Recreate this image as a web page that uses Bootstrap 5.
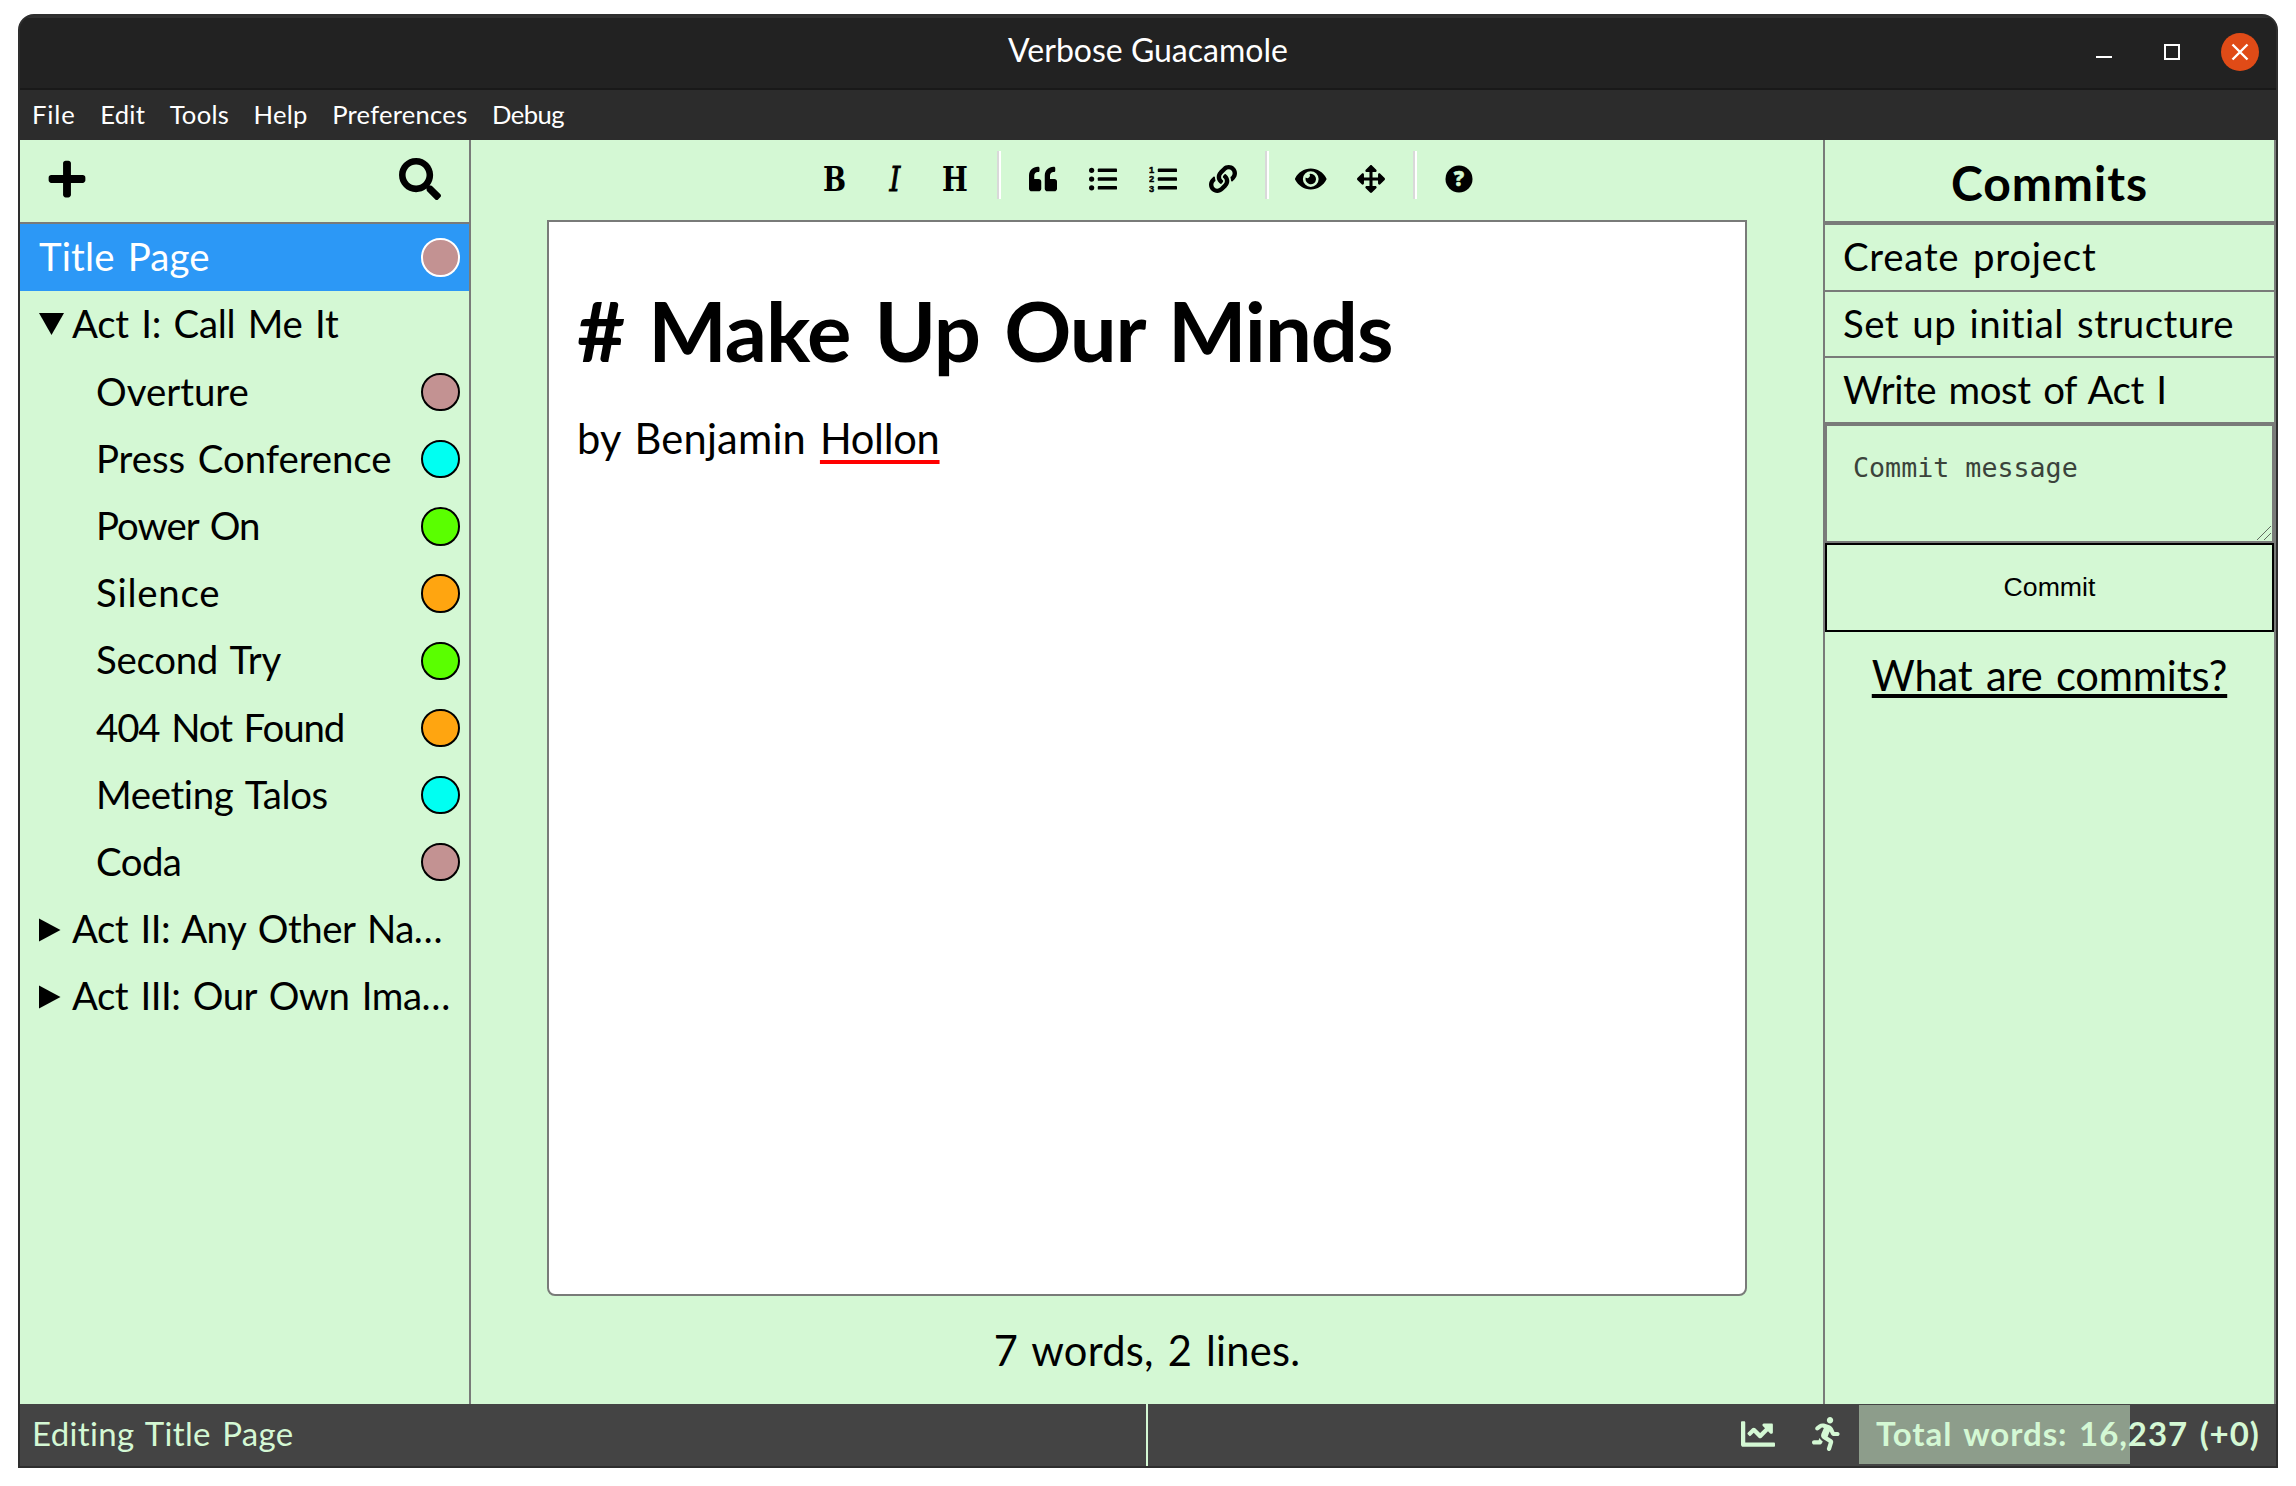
<!DOCTYPE html>
<html lang="en">
<head>
<meta charset="utf-8">
<title>Verbose Guacamole</title>
<link href="https://cdn.jsdelivr.net/npm/bootstrap@5.3.0/dist/css/bootstrap.min.css" rel="stylesheet">
<style>
:root { --mint: #d4f8d4; --line: #797b79; }
body { font-family: Lato, "Open Sans", sans-serif; color: #000; background: #fff; font-size: 38.4px; line-height: 1.2; overflow: hidden; font-variant-ligatures: no-common-ligatures; }
svg { display: block; fill: currentColor; }
.app-window { width: 2260px; height: 1454px; margin: 14px 18px; background: #2e2e2e; border: 2px solid #2e2e2e; border-radius: 16px 16px 0 0; overflow: hidden; }
.titlebar { height: 74px; background: #222; border-top: 2px solid #313131; border-bottom: 2px solid #191919; color: #fff; font-size: 32px; padding-bottom: 6px; }
.win-controls { top: 0; right: 17px; height: 68px; gap: 41px; }
.win-min { margin-right: 11px; }
.win-close { width: 38px; height: 38px; background: #e04b17; }
.menubar { height: 50px; background: #2c2c2c; color: #fff; font-size: 25.6px; letter-spacing: .01em; padding: 0 0 1px 12px; gap: 24.5px; }
.menubar span:first-child { letter-spacing: .035em; }
.menubar span:last-child { letter-spacing: -.02em; }
.workarea { height: 1264px; background: var(--mint); word-spacing: .08em; }
.files { width: 451px; border-right: 2px solid var(--line); }
.files-head { height: 84px; border-bottom: 2px solid var(--line); padding: 0 28.5px 4px 26px; }
.file-row { height: 67.2px; padding: 0 9.5px 2.5px 19px; white-space: nowrap; }
.file-row.current { background: #2c98f6; color: #fff; }
.file-row.child-doc { padding-left: 76px; }
.fold { width: 33px; }
.status-dot { width: 38.4px; height: 38.4px; border: 2px solid currentColor; margin-top: 2.5px; }
.s-rose { background: #c39292; } .s-cyan { background: #00fff2; } .s-green { background: #5aff00; } .s-orange { background: #ffa510; }
.tools { height: 80px; padding-bottom: 2px; }
.tool { width: 60px; height: 60px; }
.tool-glyph { font-family: "DejaVu Serif", serif; font-weight: 700; font-size: 33px; line-height: 1; font-stretch: condensed; transform: scaleX(.92); }
i.tool-glyph { font-style: italic; font-weight: 400; -webkit-text-stroke: .8px; }
.tool-sep { width: 4px; height: 48px; margin: 0 12px 8px; border-left: 2px solid #d9d9d9; border-right: 2px solid #fff; }
.page-sheet { width: 1200px; height: 1076px; background: #fff; border: 2px solid var(--line); border-radius: 0 0 8px 8px; padding: 58px 28px; }
.doc-title { font-size: 83.2px; line-height: 100px; font-weight: 700; margin: 0; word-spacing: .06em; letter-spacing: -.013em; }
.doc-line { font-size: 41.6px; line-height: 50px; letter-spacing: .005em; margin: 33px 0 0; }
.misspelt { text-decoration: underline 4px red; text-underline-offset: 6px; text-decoration-skip-ink: none; letter-spacing: -.006em; }
.counts { font-size: 41.6px; letter-spacing: .006em; margin-top: 29px; line-height: 50px; }
.commits { width: 453px; border: 2px solid var(--line); border-width: 0 2px; }
.commits-head { height: 85px; border-bottom: 4px solid var(--line); font-size: 48px; font-weight: 700; letter-spacing: .02em; padding-top: 4px; margin: 0; }
.commit-row { height: 66px; padding: 0 18px 2.5px; border-bottom: 2px solid var(--line); white-space: nowrap; }
.commit-msg { display: block; width: 100%; height: 119px; border: 2px solid var(--line); background: transparent; padding: 26px 26px; font: 26.67px/31px "DejaVu Sans Mono", monospace; word-spacing: 0; border-radius: 0; outline: 0; resize: none; }
.commit-msg::placeholder { color: #3b433b; opacity: 1; }
.grip { right: 3px; bottom: 3px; fill: none; stroke: #5f6b5f; }
.commit-go { width: 100%; height: 89px; border: 2px solid #000; border-radius: 0; padding: 0; font: 26.67px/1 "Liberation Sans", Arial, sans-serif; color: #000; }
.commit-help { font-size: 41.6px; line-height: 50px; margin-top: 18px; color: #000; letter-spacing: -.004em; text-decoration: underline 4px; text-underline-offset: 3px; text-decoration-skip-ink: none; }
.statusbar { height: 62px; background: #444; color: var(--mint); font-size: 33px; white-space: nowrap; word-spacing: .08em; }
.status-half { width: 1127.5px; border-right: 2px solid var(--mint); padding: 0 0 2px 12px; letter-spacing: .01em; }
.word-goal { width: 417px; height: 59px; margin-top: 1px; padding: 0 0 1px 17px; font-weight: 700; letter-spacing: .028em; background: linear-gradient(#8d9d8b, #8d9d8b) no-repeat 0 0 / 271px 100%; }
</style>
</head>
<body>
<div class="app-window">
  <header class="titlebar position-relative d-flex align-items-center justify-content-center">
    <span>Verbose Guacamole</span>
    <div class="win-controls position-absolute d-flex align-items-center">
      <svg class="win-min" width="16" height="16"><path d="M0 12h16v2H0z"/></svg>
      <svg width="16" height="16"><path d="M0 0h16v16H0zM2 2v12h12V2z" fill-rule="evenodd"/></svg>
      <span class="win-close rounded-circle d-flex align-items-center justify-content-center"><svg width="18" height="18" stroke="#fff" stroke-width="2.4"><path d="M1.5 1.5l15 15M16.5 1.5l-15 15"/></svg></span>
    </div>
  </header>
  <nav class="menubar d-flex align-items-center">
    <span>File</span><span>Edit</span><span>Tools</span><span>Help</span><span>Preferences</span><span>Debug</span>
  </nav>
  <main class="workarea d-flex">
    <aside class="files flex-shrink-0">
      <div class="files-head d-flex align-items-center justify-content-between">
        <svg width="42" height="42" viewBox="-32 0 512 512"><path d="M416 208H272V64c0-17.67-14.33-32-32-32h-32c-17.67 0-32 14.33-32 32v144H32c-17.67 0-32 14.33-32 32v32c0 17.67 14.33 32 32 32h144v144c0 17.67 14.33 32 32 32h32c17.67 0 32-14.33 32-32V304h144c17.67 0 32-14.33 32-32v-32c0-17.67-14.33-32-32-32z"/></svg>
        <svg width="42" height="42" viewBox="0 0 512 512"><path d="M505 442.7L405.3 343c-4.5-4.5-10.6-7-17-7H372c27.6-35.3 44-79.7 44-128C416 93.1 322.9 0 208 0S0 93.1 0 208s93.1 208 208 208c48.3 0 92.7-16.4 128-44v16.3c0 6.4 2.5 12.5 7 17l99.7 99.7c9.4 9.4 24.6 9.4 33.9 0l28.3-28.3c9.4-9.4 9.4-24.6.1-34zM208 336c-70.7 0-128-57.2-128-128 0-70.7 57.2-128 128-128 70.7 0 128 57.2 128 128 0 70.7-57.2 128-128 128z"/></svg>
      </div>
      <div class="file-row current d-flex align-items-center justify-content-between" style="letter-spacing:.004em">Title Page<i class="status-dot rounded-circle s-rose"></i></div>
      <div class="file-row d-flex align-items-center" style="letter-spacing:-.008em"><svg class="fold" height="22" viewBox="0 0 33 22"><path d="M0 0h25L12.5 22z"/></svg>Act I: Call Me It</div>
      <div class="file-row child-doc d-flex align-items-center justify-content-between">Overture<i class="status-dot rounded-circle s-rose"></i></div>
      <div class="file-row child-doc d-flex align-items-center justify-content-between" style="letter-spacing:-.002em">Press Conference<i class="status-dot rounded-circle s-cyan"></i></div>
      <div class="file-row child-doc d-flex align-items-center justify-content-between" style="letter-spacing:-.026em">Power On<i class="status-dot rounded-circle s-green"></i></div>
      <div class="file-row child-doc d-flex align-items-center justify-content-between" style="letter-spacing:.02em">Silence<i class="status-dot rounded-circle s-orange"></i></div>
      <div class="file-row child-doc d-flex align-items-center justify-content-between" style="letter-spacing:-.007em">Second Try<i class="status-dot rounded-circle s-green"></i></div>
      <div class="file-row child-doc d-flex align-items-center justify-content-between" style="letter-spacing:-.029em">404 Not Found<i class="status-dot rounded-circle s-orange"></i></div>
      <div class="file-row child-doc d-flex align-items-center justify-content-between" style="letter-spacing:-.009em">Meeting Talos<i class="status-dot rounded-circle s-cyan"></i></div>
      <div class="file-row child-doc d-flex align-items-center justify-content-between" style="letter-spacing:-.015em">Coda<i class="status-dot rounded-circle s-rose"></i></div>
      <div class="file-row d-flex align-items-center" style="letter-spacing:-.013em"><svg class="fold mt-1" height="24" viewBox="0 0 33 24"><path d="M0 .5v23L21.5 12z"/></svg>Act II: Any Other Na…</div>
      <div class="file-row d-flex align-items-center" style="letter-spacing:-.013em"><svg class="fold mt-1" height="24" viewBox="0 0 33 24"><path d="M0 .5v23L21.5 12z"/></svg>Act III: Our Own Ima…</div>
    </aside>
    <section class="flex-grow-1 d-flex flex-column align-items-center">
      <div class="tools d-flex align-items-center">
        <span class="tool d-flex align-items-center justify-content-center"><b class="tool-glyph">B</b></span>
        <span class="tool d-flex align-items-center justify-content-center"><i class="tool-glyph">I</i></span>
        <span class="tool d-flex align-items-center justify-content-center"><b class="tool-glyph">H</b></span>
        <span class="tool-sep"></span>
        <span class="tool d-flex align-items-center justify-content-center"><svg width="28" height="28" viewBox="0 0 512 512"><path d="M464 256h-80v-64c0-35.3 28.7-64 64-64h8c13.3 0 24-10.7 24-24V56c0-13.3-10.7-24-24-24h-8c-88.4 0-160 71.6-160 160v240c0 26.5 21.5 48 48 48h128c26.5 0 48-21.5 48-48V304c0-26.5-21.5-48-48-48zm-288 0H96v-64c0-35.3 28.7-64 64-64h8c13.3 0 24-10.7 24-24V56c0-13.3-10.7-24-24-24h-8C71.6 32 0 103.6 0 192v240c0 26.5 21.5 48 48 48h128c26.5 0 48-21.5 48-48V304c0-26.5-21.5-48-48-48z"/></svg></span>
        <span class="tool d-flex align-items-center justify-content-center"><svg width="28" height="28" viewBox="0 0 512 512"><circle cx="48" cy="96" r="48"/><circle cx="48" cy="256" r="48"/><circle cx="48" cy="416" r="48"/><rect x="160" y="64" width="352" height="64" rx="16"/><rect x="160" y="224" width="352" height="64" rx="16"/><rect x="160" y="384" width="352" height="64" rx="16"/></svg></span>
        <span class="tool d-flex align-items-center justify-content-center"><svg width="28" height="28" viewBox="0 0 512 512"><g font-family="Liberation Sans" font-weight="700" font-size="170" text-anchor="middle" stroke="#000" stroke-width="8"><text x="48" y="150">1</text><text x="48" y="318">2</text><text x="48" y="488">3</text></g><rect x="160" y="64" width="352" height="64" rx="16"/><rect x="160" y="224" width="352" height="64" rx="16"/><rect x="160" y="384" width="352" height="64" rx="16"/></svg></span>
        <span class="tool d-flex align-items-center justify-content-center"><svg width="28" height="28" viewBox="0 0 512 512"><path d="M326.612 185.391c59.747 59.809 58.927 155.698.36 214.59-.11.12-.24.25-.36.37l-67.2 67.2c-59.27 59.27-155.699 59.262-214.96 0-59.27-59.26-59.27-155.7 0-214.96l37.106-37.106c9.84-9.84 26.786-3.3 27.294 10.606.648 17.722 3.826 35.527 9.69 52.721 1.986 5.822.567 12.262-3.783 16.612l-13.087 13.087c-28.026 28.026-28.905 73.66-1.155 101.96 28.024 28.579 74.086 28.749 102.325.51l67.2-67.19c28.191-28.191 28.073-73.757 0-101.83-3.701-3.694-7.429-6.564-10.341-8.569a16.037 16.037 0 0 1-6.947-12.606c-.396-10.567 3.348-21.456 11.698-29.806l21.054-21.055c5.521-5.521 14.182-6.199 20.584-1.731a152.482 152.482 0 0 1 20.522 17.197zM467.547 44.449c-59.261-59.262-155.69-59.27-214.96 0l-67.2 67.2c-.12.12-.25.25-.36.37-58.566 58.892-59.387 154.781.36 214.59a152.454 152.454 0 0 0 20.521 17.196c6.402 4.468 15.064 3.789 20.584-1.731l21.054-21.055c8.35-8.35 12.094-19.239 11.698-29.806a16.037 16.037 0 0 0-6.947-12.606c-2.912-2.005-6.64-4.875-10.341-8.569-28.073-28.073-28.191-73.639 0-101.83l67.2-67.19c28.239-28.239 74.3-28.069 102.325.51 27.75 28.3 26.872 73.934-1.155 101.96l-13.087 13.087c-4.35 4.35-5.769 10.79-3.783 16.612 5.864 17.194 9.042 34.999 9.69 52.721.509 13.906 17.454 20.446 27.294 10.606l37.106-37.106c59.271-59.259 59.271-155.699.001-214.959z"/></svg></span>
        <span class="tool-sep"></span>
        <span class="tool d-flex align-items-center justify-content-center"><svg width="31.5" height="28" viewBox="0 0 576 512"><path d="M572.52 241.4C518.29 135.59 410.93 64 288 64S57.68 135.64 3.48 241.41a32.35 32.35 0 0 0 0 29.19C57.71 376.41 165.07 448 288 448s230.32-71.64 284.52-177.41a32.35 32.35 0 0 0 0-29.19zM288 400a144 144 0 1 1 144-144 143.93 143.93 0 0 1-144 144zm0-240a95.31 95.31 0 0 0-25.31 3.79 47.85 47.85 0 0 1-66.9 66.9A95.78 95.78 0 1 0 288 160z"/></svg></span>
        <span class="tool d-flex align-items-center justify-content-center"><svg width="28" height="28" viewBox="0 0 512 512"><path d="M352.201 425.775l-79.196 79.196c-9.373 9.373-24.568 9.373-33.941 0l-79.196-79.196c-15.119-15.119-4.411-40.971 16.971-40.97h51.162L228 284H127.196v51.162c0 21.382-25.851 32.09-40.971 16.971L7.029 272.937c-9.373-9.373-9.373-24.569 0-33.941L86.225 159.8c15.119-15.119 40.971-4.411 40.971 16.971V228H228V127.196h-51.23c-21.382 0-32.09-25.851-16.971-40.971l79.196-79.196c9.373-9.373 24.568-9.373 33.941 0l79.196 79.196c15.119 15.119 4.411 40.971-16.971 40.971h-51.162V228h100.804v-51.162c0-21.382 25.851-32.09 40.97-16.971l79.196 79.196c9.373 9.373 9.373 24.569 0 33.941L425.773 352.2c-15.119 15.119-40.971 4.411-40.97-16.971V284H284v100.804h51.23c21.382 0 32.09 25.851 16.971 40.971z"/></svg></span>
        <span class="tool-sep"></span>
        <span class="tool d-flex align-items-center justify-content-center"><svg width="28" height="28" viewBox="0 0 28 28"><circle cx="14" cy="14" r="13.5"/><text x="14" y="21.3" text-anchor="middle" font-family="Open Sans" font-weight="800" font-size="20.5" fill="#d4f8d4" stroke="#d4f8d4" stroke-width=".5">?</text></svg></span>
      </div>
      <article class="page-sheet">
        <h1 class="doc-title"># Make Up Our Minds</h1>
        <p class="doc-line">by Benjamin <span class="misspelt">Hollon</span></p>
      </article>
      <div class="counts">7 words, 2 lines.</div>
    </section>
    <aside class="commits flex-shrink-0 d-flex flex-column">
      <h2 class="commits-head d-flex align-items-center justify-content-center">Commits</h2>
      <div class="commit-row d-flex align-items-center" style="height:67px;letter-spacing:.02em">Create project</div>
      <div class="commit-row d-flex align-items-center" style="letter-spacing:.012em">Set up initial structure</div>
      <div class="commit-row d-flex align-items-center" style="letter-spacing:-.011em">Write most of Act I</div>
      <div class="position-relative">
        <textarea class="commit-msg" placeholder="Commit message"></textarea>
        <svg class="grip position-absolute" width="14" height="14"><path d="M0 14L14 0M7 14l7-7"/></svg>
      </div>
      <button class="btn commit-go">Commit</button>
      <a class="commit-help align-self-center">What are commits?</a>
    </aside>
  </main>
  <footer class="statusbar d-flex">
    <div class="status-half d-flex align-items-center">Editing Title Page</div>
    <div class="flex-grow-1 d-flex align-items-center justify-content-end">
      <svg width="34" height="34" viewBox="0 0 512 512" style="margin-right:37px;margin-bottom:3px"><path d="M496 384H64V80c0-8.84-7.16-16-16-16H16C7.16 64 0 71.16 0 80v336c0 17.67 14.33 32 32 32h464c8.84 0 16-7.16 16-16v-32c0-8.84-7.16-16-16-16zM464 96H345.94c-21.38 0-32.09 25.85-16.97 40.97l32.4 32.4L288 242.75l-73.37-73.37c-12.5-12.5-32.76-12.5-45.25 0l-68.69 68.69c-6.25 6.25-6.25 16.38 0 22.63l22.62 22.62c6.25 6.25 16.38 6.25 22.63 0L192 237.25l73.37 73.37c12.5 12.5 32.76 12.5 45.25 0l96-96 32.4 32.4c15.12 15.12 40.97 4.41 40.97-16.97V112c.01-8.84-7.15-16-15.99-16z"/></svg>
      <svg width="27.6" height="34" viewBox="0 0 416 512" style="margin-right:19.5px;margin-bottom:3px"><path d="M272 96c26.51 0 48-21.49 48-48S298.51 0 272 0s-48 21.49-48 48 21.49 48 48 48zM113.69 317.47l-14.8 34.52H32c-17.67 0-32 14.33-32 32s14.33 32 32 32h77.45c19.25 0 36.58-11.44 44.11-29.09l8.79-20.52-10.67-6.3c-17.32-10.23-30.06-25.37-37.99-42.61zM384 223.99h-44.03l-26.06-53.25c-12.5-25.55-35.45-44.23-61.78-50.94l-71.08-21.14c-28.3-6.8-57.77-.55-80.84 17.14l-39.67 30.41c-14.03 10.75-16.69 30.83-5.94 44.86s30.84 16.69 44.86 5.94l39.67-30.41c7.67-5.89 17.44-8 25.27-6.14l14.7 4.37-37.46 87.39c-12.62 29.48-1.31 64.01 26.3 80.31l84.98 50.17-27.47 87.73c-5.28 16.86 4.11 34.82 20.97 40.1 3.19 1 6.41 1.48 9.58 1.48 13.61 0 26.25-8.77 30.52-22.45l31.64-101.06c5.91-20.77-2.89-43.08-21.64-54.39l-61.24-36.14 31.31-78.28 20.27 41.43c8 16.34 24.92 26.89 43.11 26.89H384c17.67 0 32-14.33 32-32s-14.33-32-32-32z"/></svg>
      <div class="word-goal d-flex align-items-center align-self-start">Total words: 16,237 (+0)</div>
    </div>
  </footer>
</div>
<script src="https://cdn.jsdelivr.net/npm/bootstrap@5.3.0/dist/js/bootstrap.bundle.min.js"></script>
</body>
</html>
